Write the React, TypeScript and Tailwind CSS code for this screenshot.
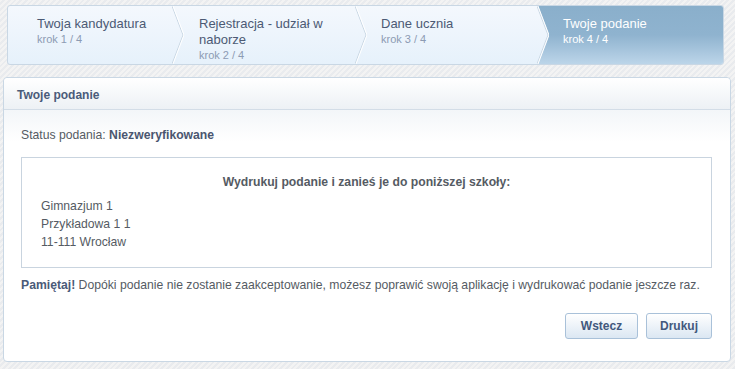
import React from 'react'

const STEPS = [
  { title: 'Twoja kandydatura', sub: 'krok 1 / 4', w: 'w-[165px]', pl: 'pl-[29px]' },
  { title: 'Rejestracja - udział w naborze', sub: 'krok 2 / 4', w: 'w-[183px]', pl: 'pl-[26px]' },
  { title: 'Dane ucznia', sub: 'krok 3 / 4', w: 'w-[182px]', pl: 'pl-[25px]' },
]

function Chevron() {
  return (
    <svg className="absolute right-[-11px] top-0 z-10 h-full w-[12px]" viewBox="0 0 12 58" preserveAspectRatio="none">
      <polyline points="0,0 11,29 0,58" fill="none" stroke="#c9d7e4" strokeWidth="1" />
      <polyline points="1,0 12,29 1,58" fill="none" stroke="#ffffff" strokeWidth="1" />
    </svg>
  )
}

export default function App() {
  return (
    <div className="h-[369px] w-[735px] overflow-hidden bg-[repeating-linear-gradient(135deg,#f3f3f3_0px,#f3f3f3_2px,#e9ebee_2px,#e9ebee_4px)] font-['Liberation_Sans',Arial,sans-serif]">
      <div className="pl-[7px] pr-[11px] pt-[5px]">
        <div className="flex h-[60px] overflow-hidden rounded-[3px] border border-[#c9d7e4] bg-gradient-to-b from-[#f4f8fd] to-[#e6f1fb]">
          {STEPS.map((s) => (
            <div key={s.sub} className={`relative ${s.w} shrink-0 ${s.pl} pt-[10px] pr-[10px]`}>
              <div className="text-[13px] leading-[16px] text-[#4c5a74]">{s.title}</div>
              <div className="text-[11px] leading-[14px] text-[#8c9bb3]">{s.sub}</div>
              <Chevron />
            </div>
          ))}
          <div className="flex-1 bg-gradient-to-b from-[#8aafcb] via-[#8fb3cf] to-[#bcd5e9] pl-[25px] pt-[10px] [clip-path:polygon(0_0,100%_0,100%_100%,0_100%,11px_50%)]">
            <div className="text-[13px] leading-[16px] text-white">Twoje podanie</div>
            <div className="text-[11px] leading-[14px] text-white">krok 4 / 4</div>
          </div>
        </div>
      </div>

      <div className="ml-[3px] mr-[4px] mt-[12px] h-[285px] rounded-[4px] border border-[#c9d7e4] bg-white">
        <div className="h-[32px] rounded-t-[4px] border-b border-[#d3dde7] bg-gradient-to-b from-white to-[#edf1f5] pl-[13px] pt-[10px] text-[12px] font-bold leading-[14px] text-[#4a5b7a]">
          Twoje podanie
        </div>
        <div className="bg-gradient-to-b from-[#f3f6f9] to-white px-[17px] pt-[18px]">
          <p className="text-[12.2px] leading-[14px] text-[#555b63]">
            Status podania: <b className="text-[#4a5670]">Niezweryfikowane</b>
          </p>
        </div>
        <div className="pl-[17px] pr-[18px]">
          <div className="mt-[15px] h-[111px] border border-[#c9d4df] px-[19px] pt-[17px] text-[12.2px] text-[#555b63]">
            <p className="text-center font-bold leading-[14px]">Wydrukuj podanie i zanieś je do poniższej szkoły:</p>
            <div className="mt-[8px] leading-[18px]">
              <div>Gimnazjum 1</div>
              <div>Przykładowa 1 1</div>
              <div>11-111 Wrocław</div>
            </div>
          </div>
          <p className="mt-[10px] text-[12.2px] leading-[14px] text-[#555b63]">
            <b className="text-[#4a5a78]">Pamiętaj!</b> Dopóki podanie nie zostanie zaakceptowanie, możesz poprawić swoją aplikację i wydrukować podanie jeszcze raz.
          </p>
          <div className="mt-[21px] flex justify-end gap-[8px]">
            <button className="h-[26px] w-[73px] rounded-[3px] border border-[#a9c1d9] bg-gradient-to-b from-white to-[#dbe7f3] text-[12px] font-bold text-[#42587d]">
              Wstecz
            </button>
            <button className="h-[26px] w-[66px] rounded-[3px] border border-[#a9c1d9] bg-gradient-to-b from-white to-[#dbe7f3] text-[12px] font-bold text-[#42587d]">
              Drukuj
            </button>
          </div>
        </div>
      </div>
    </div>
  )
}
